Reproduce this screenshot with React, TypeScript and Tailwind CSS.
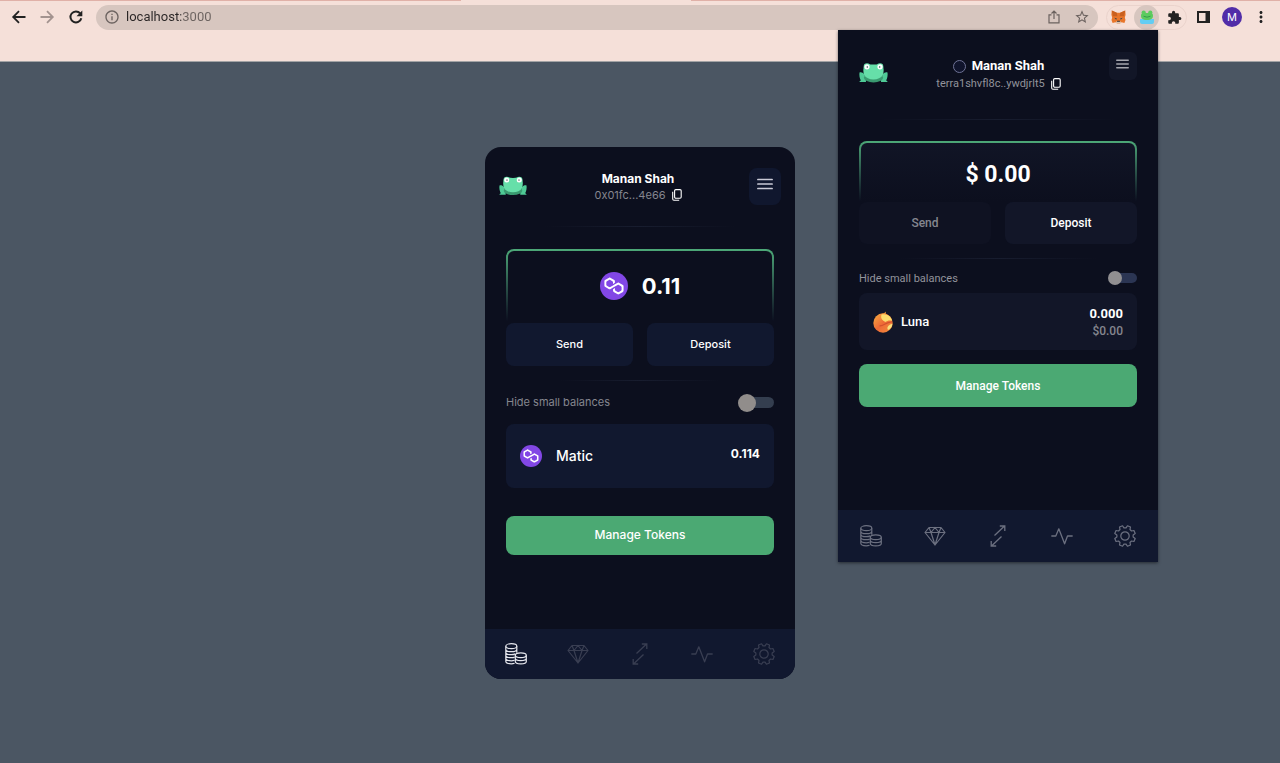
import { useState } from "react";
import type { ReactNode } from "react";
import { MdExtension, MdInfoOutline, MdMoreVert, MdStarBorder } from "react-icons/md";

type IconProps = { className?: string };

function ArrowIcon({ className }: IconProps) {
  return (
    <svg viewBox="0 0 18 18" className={className} fill="none" stroke="currentColor" strokeWidth="1.800" aria-hidden="true">
      <path d="M15.500 9H3.500M9 3.200 3.200 9 9 14.800" />
    </svg>
  );
}

function ReloadIcon({ className }: IconProps) {
  return (
    <svg viewBox="0 0 20 20" className={className} fill="none" stroke="currentColor" strokeWidth="2" aria-hidden="true">
      <path d="M15.300 11.200A5.500 5.500 0 1 1 14.200 6.400" />
      <path d="M16.300 3.500v5.800h-5.800l5.800-5.800Z" fill="currentColor" stroke="none" />
    </svg>
  );
}

function FrogLogo({ className }: IconProps) {
  return (
    <svg viewBox="0 0 29 20" className={className} aria-hidden="true">
      <path d="M0.500 9.500C2 8.800 4 9.600 5 11c1.500 2 2 5 2 8H0.400c.2-.9.800-1.300 1.500-1.500C.6 15.500.1 12 .5 9.500Z" fill="#4fca96" />
      <path d="M28.500 9.500c-1.500-.7-3.500.1-4.500 1.500-1.500 2-2 5-2 8h6.600c-.2-.9-.8-1.300-1.500-1.500 1.300-2 1.800-5.500 1.400-8Z" fill="#4fca96" />
      <ellipse cx="14.500" cy="14.800" rx="9.600" ry="4.600" fill="#3a9a70" />
      <path d="M5.500 2.500C8 .5 11 1.600 14.500 1.600S21 .5 23.500 2.500C25 5 25 9 23.800 12c-1.600 3-5.300 4.400-9.300 4.400S6.800 15 5.200 12C4 9 4 5 5.500 2.500Z" fill="#66dfa9" />
      <circle cx="8" cy="3.600" r="3.300" fill="#66dfa9" />
      <circle cx="21" cy="3.600" r="3.300" fill="#66dfa9" />
      <circle cx="8" cy="3.800" r="2.600" fill="#fff" />
      <circle cx="21" cy="3.800" r="2.600" fill="#fff" />
      <ellipse cx="8.300" cy="3.900" rx="0.700" ry="1" fill="#62746e" />
      <ellipse cx="20.700" cy="3.900" rx="0.700" ry="1" fill="#62746e" />
    </svg>
  );
}

function FoxIcon({ className }: IconProps) {
  return (
    <svg viewBox="0 0 16 15" className={className} aria-hidden="true">
      <path d="M.8.6 6.200 3h3.600L15.200.6l.4 4.400-.8 3 .7 2.800-1.200 3-3-.7-1.800 1.300H6.500l-1.800-1.300-3 .7L.5 10.800 1.200 8 .4 5 .8.600Z" fill="#e8762b" />
      <path d="M.8.6 6.200 3l.6 3.600L2 6.800.8.600ZM15.200.6 9.800 3l-.6 3.600L14 6.800 15.200.6Z" fill="#c9601f" />
      <path d="m3.600 8.200 2.600.9-.7 1.300-1.900-2.200ZM12.400 8.200l-2.600.9.7 1.300 1.900-2.200Z" fill="#2c3f4f" />
      <path d="m4.700 13.100 2-1.200h2.600l2 1.200-1.800 1.300h-3l-1.800-1.300Z" fill="#d9c5b4" />
      <path d="M6.600 11.500h2.800l.3 1.200H6.300l.3-1.200Z" fill="#3a2a24" />
    </svg>
  );
}

function FrogExtensionIcon({ className }: IconProps) {
  return (
    <svg viewBox="0 0 14 14" className={className} aria-hidden="true">
      <path d="M0 9h14v3a2 2 0 0 1-2 2H2a2 2 0 0 1-2-2V9Z" fill="#62cdf3" />
      <path d="M1 5.500C1 2.500 3 3 7 3s6-.5 6 2.500c0 2.800-1.500 4.500-6 4.500S1 8.300 1 5.500Z" fill="#5ccb5f" />
      <circle cx="3.700" cy="2.600" r="2.100" fill="#5ccb5f" />
      <circle cx="10.300" cy="2.600" r="2.100" fill="#5ccb5f" />
      <path d="M3.500 6.200Q7 8.200 10.500 6.200" stroke="#2d8f46" strokeWidth="0.800" fill="none" />
    </svg>
  );
}

function ShareIcon({ className }: IconProps) {
  return (
    <svg viewBox="0 0 12 14" className={className} fill="none" stroke="currentColor" strokeWidth="1.200" aria-hidden="true">
      <path d="M3.500 4.800H1v8h10v-8H8.500M6 9V1.200M3.500 3.500 6 1l2.500 2.500" />
    </svg>
  );
}

function SidePanelIcon({ className }: IconProps) {
  return (
    <svg viewBox="0 0 13 12" className={className} aria-hidden="true">
      <path d="M1 1h11v10H1z" fill="none" stroke="currentColor" strokeWidth="2" />
      <path d="M8.500 1H12v10H8.500z" fill="currentColor" />
    </svg>
  );
}

function CopyIcon({ className }: IconProps) {
  return (
    <svg viewBox="0 0 10 12" className={className} fill="none" stroke="currentColor" strokeWidth="1.100" aria-hidden="true">
      <rect x="2.600" y="0.600" width="6.600" height="8.600" rx="1.200" />
      <path d="M.7 2.800v7.300c0 .7.500 1.200 1.200 1.200h5.300" />
    </svg>
  );
}

function MenuLines({ className }: IconProps) {
  return (
    <svg viewBox="0 0 16 12" className={className} stroke="currentColor" strokeWidth="1.700" strokeLinecap="round" preserveAspectRatio="none" aria-hidden="true">
      <path d="M.9 1.500h14.200M.9 6h14.200M.9 10.500h14.200" />
    </svg>
  );
}

function PolygonLogo({ className }: IconProps) {
  return (
    <svg viewBox="0 0 28 28" className={className} aria-hidden="true">
      <circle cx="14" cy="14" r="14" fill="#8247e5" />
      <path
        transform="translate(4.400 5.600) scale(0.500)"
        d="M29 10.200c-.7-.4-1.600-.4-2.400 0L21 13.500l-3.800 2.100-5.500 3.300c-.7.4-1.600.4-2.400 0L5 16.300c-.7-.4-1.200-1.200-1.200-2.100v-5c0-.8.4-1.600 1.200-2.100l4.300-2.500c.7-.4 1.600-.4 2.400 0L16 7.200c.7.4 1.200 1.200 1.200 2.100v3.300l3.800-2.200V7c0-.8-.4-1.600-1.200-2.100l-8-4.700c-.7-.4-1.600-.4-2.400 0L1.200 5C.4 5.400 0 6.200 0 7v9.400c0 .8.4 1.600 1.200 2.100l8.100 4.700c.7.4 1.600.4 2.400 0l5.500-3.200 3.800-2.200 5.500-3.200c.7-.4 1.600-.4 2.400 0l4.300 2.500c.7.4 1.200 1.200 1.200 2.100v5c0 .8-.4 1.600-1.200 2.100L29 28.800c-.7.4-1.600.4-2.400 0l-4.300-2.500c-.7-.4-1.200-1.200-1.200-2.100V21l-3.800 2.200v3.300c0 .8.4 1.600 1.200 2.100l8.100 4.700c.7.4 1.600.4 2.400 0l8.100-4.700c.7-.4 1.200-1.200 1.200-2.100V17c0-.8-.4-1.600-1.200-2.100L29 10.200Z"
        fill="#fff"
      />
    </svg>
  );
}

function LunaLogo({ className }: IconProps) {
  return (
    <svg viewBox="0 0 20 22" className={className} aria-hidden="true">
      <defs>
        <linearGradient id="luna-body" x1="0" y1="0" x2="1" y2="1">
          <stop offset="0" stopColor="#f9b03f" />
          <stop offset="0.500" stopColor="#ee6a37" />
          <stop offset="1" stopColor="#f2903b" />
        </linearGradient>
      </defs>
      <path d="M8 3c2.300-.2 3.800-1 4.700-2.600.2 1.200.2 2.300-.1 3.200L8 3Z" fill="#f2a13c" />
      <circle cx="10" cy="12" r="9.700" fill="url(#luna-body)" />
      <path d="M8.500 3.500c5-1.300 9.800 1.800 10.700 6.200-3.400-.6-5 .3-7 1.200-2.500-1.500-5-3.400-3.700-7.400Z" fill="#fbdc6c" />
      <path d="M19.500 12.800c-.4 3.200-2.300 5.300-4.400 6.300-1.600-2-.6-5 4.400-6.300Z" fill="#fae07c" />
      <path d="M7 14.800c4 0 5.500-3.700 11.800-4" fill="none" stroke="#d4502f" strokeWidth="1.200" strokeLinecap="round" />
    </svg>
  );
}

function CoinsIcon({ className }: IconProps) {
  return (
    <svg viewBox="0 0 22 22" className={className} fill="none" stroke="currentColor" strokeWidth="1.200" aria-hidden="true">
      <ellipse cx="6.300" cy="3.200" rx="5.500" ry="2.500" />
      <path d="M.8 3.200v15.100c0 1.400 2.500 2.500 5.500 2.500 1.200 0 2.300-.2 3.300-.5M11.800 3.200v6.500M.8 6.200c0 1.400 2.500 2.500 5.500 2.500s5.500-1.100 5.500-2.500M.8 9.200c0 1.400 2.500 2.500 5.500 2.500 1.600 0 3-.3 4-.8M.8 12.200c0 1.400 2.500 2.500 5.500 2.500 1.300 0 2.500-.2 3.400-.6M.8 15.300c0 1.400 2.500 2.500 5.500 2.500 1.200 0 2.300-.2 3.300-.5" />
      <ellipse cx="15.800" cy="12.200" rx="5.500" ry="2.400" />
      <path d="M10.300 12.200v6.300c0 1.300 2.500 2.400 5.500 2.400s5.500-1.100 5.500-2.400v-6.300M10.300 15.300c0 1.300 2.500 2.400 5.500 2.400s5.500-1.100 5.500-2.400" />
    </svg>
  );
}

function DiamondIcon({ className }: IconProps) {
  return (
    <svg viewBox="0 0 22 22" className={className} fill="none" stroke="currentColor" strokeWidth="1.200" strokeLinejoin="round" aria-hidden="true">
      <path d="M5 2.500h12l4 5L11 20 1 7.500l4-5ZM1 7.500h20M5 2.500l2 5L11 20l4-12.500 2-5M7 7.500l4-5 4 5" />
    </svg>
  );
}

function SwapIcon({ className }: IconProps) {
  return (
    <svg viewBox="0 0 22 22" className={className} fill="none" stroke="currentColor" strokeWidth="1.300" aria-hidden="true">
      <path d="M7.500 10.500 17.500 1M12.800 1h5v5M14.500 11.500 4.500 21M9.200 21h-5v-5" />
    </svg>
  );
}

function PulseIcon({ className }: IconProps) {
  return (
    <svg viewBox="0 0 22 22" className={className} fill="none" stroke="currentColor" strokeWidth="1.300" strokeLinejoin="round" strokeLinecap="round" aria-hidden="true">
      <path d="M.8 11h4l3-7.200 5.800 15L16.500 11h4.700" />
    </svg>
  );
}

const gearTeeth = Array.from({ length: 8 }, (_, i) => {
  const center = 22.5 + i * 45;
  return [
    [-15, 8.2],
    [-9, 10.5],
    [9, 10.5],
    [15, 8.2],
  ]
    .map(([offset, radius]) => {
      const angle = ((center + offset) * Math.PI) / 180;
      return `${(11 + radius * Math.cos(angle)).toFixed(2)},${(11 + radius * Math.sin(angle)).toFixed(2)}`;
    })
    .join(" ");
}).join(" ");

function GearIcon({ className }: IconProps) {
  return (
    <svg viewBox="0 0 22 22" className={className} fill="none" stroke="currentColor" strokeWidth="1.200" strokeLinejoin="round" aria-hidden="true">
      <polygon points={gearTeeth} />
      <circle cx="11" cy="11" r="4.200" />
    </svg>
  );
}

const navItems = [
  { label: "Tokens", Icon: CoinsIcon },
  { label: "Collectibles", Icon: DiamondIcon },
  { label: "Swap", Icon: SwapIcon },
  { label: "Activity", Icon: PulseIcon },
  { label: "Settings", Icon: GearIcon },
];

function BottomNav({ tone, activeTone, className }: { tone: string; activeTone: string; className: string }) {
  return (
    <nav className={`flex items-center justify-between bg-[#11182f] ${className}`}>
      {navItems.map(({ label, Icon }, index) => (
        <button key={label} type="button" aria-label={label} className={index === 0 ? activeTone : tone}>
          <Icon className="size-[22px]" />
        </button>
      ))}
    </nav>
  );
}

function Divider({ className }: { className: string }) {
  return <div className={`h-px bg-linear-to-r from-transparent via-[#181d2f] to-transparent ${className}`} />;
}

function BalanceFrame({ className, innerClassName, children }: { className: string; innerClassName: string; children: ReactNode }) {
  return (
    <div className={`flex rounded-t-lg bg-linear-to-b from-[#4da978] to-[#0c0f1f] px-[2px] pt-[2px] ${className}`}>
      <div className={`flex flex-1 items-center justify-center rounded-t-md ${innerClassName}`}>{children}</div>
    </div>
  );
}

function WebWallet() {
  const [hideSmall, setHideSmall] = useState(false);
  return (
    <section className="flex min-h-[532px] w-[310px] flex-col overflow-hidden rounded-2xl bg-[#0c0f1e] font-['Inter',sans-serif] text-white">
      <header className="mt-[21px] flex h-[37px] items-center justify-between px-3.5">
        <FrogLogo className="h-5 w-7" />
        <div className="flex flex-col items-center pt-0.5">
          <h1 className="text-[12px] leading-4 font-bold">Manan Shah</h1>
          <div className="flex items-center gap-1.5">
            <span className="text-[11px] leading-4 text-[#85868f]">0x01fc...4e66</span>
            <button type="button" aria-label="Copy address">
              <CopyIcon className="h-3 w-2.5" />
            </button>
          </div>
        </div>
        <button type="button" aria-label="Open menu" className="flex h-[37px] w-8 items-center justify-center rounded-lg bg-[#10172e] pb-1 text-[#c9cad6]">
          <MenuLines className="h-3 w-4" />
        </button>
      </header>
      <Divider className="mx-[60px] mt-[21px]" />
      <div className="flex flex-1 flex-col px-[21px] pt-[22px]">
        <BalanceFrame className="h-[72px]" innerClassName="gap-3.5 bg-[#0c0f1e]">
          <PolygonLogo className="size-7" />
          <span className="text-[22px] leading-7 font-bold">0.11</span>
        </BalanceFrame>
        <div className="mt-0.5 grid grid-cols-2 gap-3.5 text-[11px] font-medium">
          <button type="button" className="h-[43px] rounded-lg bg-[#11182f]">Send</button>
          <button type="button" className="h-[43px] rounded-lg bg-[#11182f]">Deposit</button>
        </div>
        <Divider className="mx-[54px] mt-3.5" />
        <label className="mt-3 flex h-5 items-center justify-between text-[11px] text-[#85868f]">
          Hide small balances
          <input
            type="checkbox"
            checked={hideSmall}
            onChange={(event) => setHideSmall(event.target.checked)}
            className="flex h-[11px] w-8 appearance-none items-center rounded-full bg-[#343e4f] before:-ml-1 before:size-[18px] before:shrink-0 before:rounded-full before:bg-[#918d8b] checked:justify-end checked:before:ml-0"
          />
        </label>
        <article className="mt-[11px] flex h-16 items-center rounded-lg bg-[#11182f] px-3.5">
          <PolygonLogo className="size-[22px]" />
          <h2 className="ml-3.5 text-[14px] font-medium">Matic</h2>
          <span className="mb-1 ml-auto text-[12px] font-bold">0.114</span>
        </article>
        <button type="button" className="mt-7 h-[39px] rounded-lg bg-[#4ba973] text-[12px] font-medium">Manage Tokens</button>
      </div>
      <BottomNav className="h-[50px] px-5" tone="text-[#393e52]" activeTone="text-[#e4e5ec]" />
    </section>
  );
}

function ExtensionPopup() {
  const [hideSmall, setHideSmall] = useState(false);
  return (
    <aside className="absolute top-[30px] right-[122px] flex min-h-[532px] w-80 flex-col bg-[#0c0f1e] font-['Roboto',sans-serif] text-white shadow-[0_1px_3px_rgba(0,0,0,0.5)]">
      <header className="mt-[22px] flex items-start justify-between px-[21px]">
        <FrogLogo className="mt-[11px] h-5 w-[29px]" />
        <div className="mt-1 flex flex-col items-center">
          <div className="flex items-center gap-1.5">
            <span className="size-[13px] rounded-full border border-[#6f7396] bg-[#10142c]" />
            <h1 className="text-[13px] leading-5 font-bold">Manan Shah</h1>
          </div>
          <div className="flex items-center gap-1.5">
            <span className="text-[11px] leading-4 text-[#92939b]">terra1shvfl8c..ywdjrlt5</span>
            <button type="button" aria-label="Copy address">
              <CopyIcon className="h-3 w-2.5" />
            </button>
          </div>
        </div>
        <button type="button" aria-label="Open menu" className="flex size-7 items-center justify-center rounded-md bg-[#121627] pb-1 text-[#a5a6ae]">
          <MenuLines className="h-2.5 w-[13px]" />
        </button>
      </header>
      <Divider className="mx-[42px] mt-[27px]" />
      <div className="flex flex-1 flex-col px-[21px] pt-[21px]">
        <BalanceFrame className="h-[60px]" innerClassName="bg-linear-to-b from-[#111526] to-[#0c0f1e] pt-1.5">
          <span className="text-[23px] leading-7 font-bold">$ 0.00</span>
        </BalanceFrame>
        <div className="mt-px grid grid-cols-2 gap-3.5 text-[12px] font-medium">
          <button type="button" disabled className="h-[42px] rounded-lg bg-[#0f1222] text-[#85868f]">Send</button>
          <button type="button" className="h-[42px] rounded-lg bg-[#121628]">Deposit</button>
        </div>
        <Divider className="mx-10 mt-3.5" />
        <label className="mt-[11px] flex h-[18px] items-center justify-between text-[11px] text-[#92939b]">
          Hide small balances
          <input
            type="checkbox"
            checked={hideSmall}
            onChange={(event) => setHideSmall(event.target.checked)}
            className="mb-0.5 flex h-2.5 w-[25px] appearance-none items-center rounded-full bg-[#2b3553] before:-ml-1 before:size-3.5 before:shrink-0 before:rounded-full before:bg-[#918f91] checked:justify-end checked:before:ml-0"
          />
        </label>
        <article className="mt-[5px] flex h-[57px] items-center rounded-lg bg-[#121628] px-3.5">
          <LunaLogo className="h-[22px] w-5" />
          <h2 className="ml-2 text-[13px] font-medium">Luna</h2>
          <div className="ml-auto flex flex-col items-end">
            <span className="text-[13px] leading-[18px] font-bold">0.000</span>
            <span className="text-[12px] leading-4 font-medium text-[#85868f]">$0.00</span>
          </div>
        </article>
        <button type="button" className="mt-3.5 h-[43px] rounded-lg bg-[#4ba973] text-[12px] font-medium">Manage Tokens</button>
      </div>
      <BottomNav className="h-[52px] px-[22px]" tone="text-[#6c7080]" activeTone="text-[#6c7080]" />
    </aside>
  );
}

function BrowserBar() {
  return (
    <header className="h-[62px] border-b border-[#a3a3a5] bg-[#f5e0d9]">
      <div className="flex h-px justify-between">
        <div className="w-[36%] bg-[#e0b1a8]" />
        <div className="w-[46%] bg-[#e0b1a8]" />
      </div>
      <div className="flex h-8 items-center px-2.5 text-[#222]">
        <button type="button" aria-label="Back"><ArrowIcon className="size-[18px]" /></button>
        <button type="button" aria-label="Forward" className="ml-2.5 text-[#a3938f]"><ArrowIcon className="size-[18px] rotate-180" /></button>
        <button type="button" aria-label="Reload" className="ml-2.5"><ReloadIcon className="size-5" /></button>
        <div className="ml-2.5 flex h-[25px] flex-1 items-center rounded-full bg-[#d7c6bf] px-2 text-[#6b625f]">
          <MdInfoOutline className="size-4" />
          <input
            type="text"
            aria-label="Address"
            defaultValue="localhost:3000"
            className="ml-1.5 min-w-0 flex-1 bg-linear-to-r from-[#2a2626] from-[55px] to-[#6b625f] to-[55px] bg-clip-text font-['Roboto',sans-serif] text-[13px] text-transparent caret-black outline-none"
          />
          <button type="button" aria-label="Share"><ShareIcon className="h-3.5 w-3" /></button>
          <button type="button" aria-label="Bookmark" className="ml-3.5"><MdStarBorder className="size-4" /></button>
        </div>
        <div className="ml-2 flex h-[25px] items-center rounded-full border border-[#ead3cc] px-1">
          <button type="button" aria-label="MetaMask"><FoxIcon className="h-3.5 w-[15px]" /></button>
          <button type="button" aria-label="Frog Wallet" className="ml-2 flex size-[25px] items-center justify-center rounded-full bg-[#d7c6bf]">
            <FrogExtensionIcon className="size-3.5" />
          </button>
          <button type="button" aria-label="Extensions" className="ml-2"><MdExtension className="size-[15px]" /></button>
        </div>
        <button type="button" aria-label="Side panel" className="ml-2.5"><SidePanelIcon className="h-3 w-[13px]" /></button>
        <button type="button" aria-label="Profile" className="ml-3 flex size-5 items-center justify-center rounded-full bg-[#512da8] font-['Inter',sans-serif] text-[11px] text-white">M</button>
        <button type="button" aria-label="More" className="ml-2.5"><MdMoreVert className="size-[18px]" /></button>
      </div>
    </header>
  );
}

export default function App() {
  return (
    <div className="relative flex min-h-screen flex-col bg-[#4b5663]">
      <BrowserBar />
      <main className="flex flex-1 items-center justify-center">
        <WebWallet />
      </main>
      <ExtensionPopup />
    </div>
  );
}
